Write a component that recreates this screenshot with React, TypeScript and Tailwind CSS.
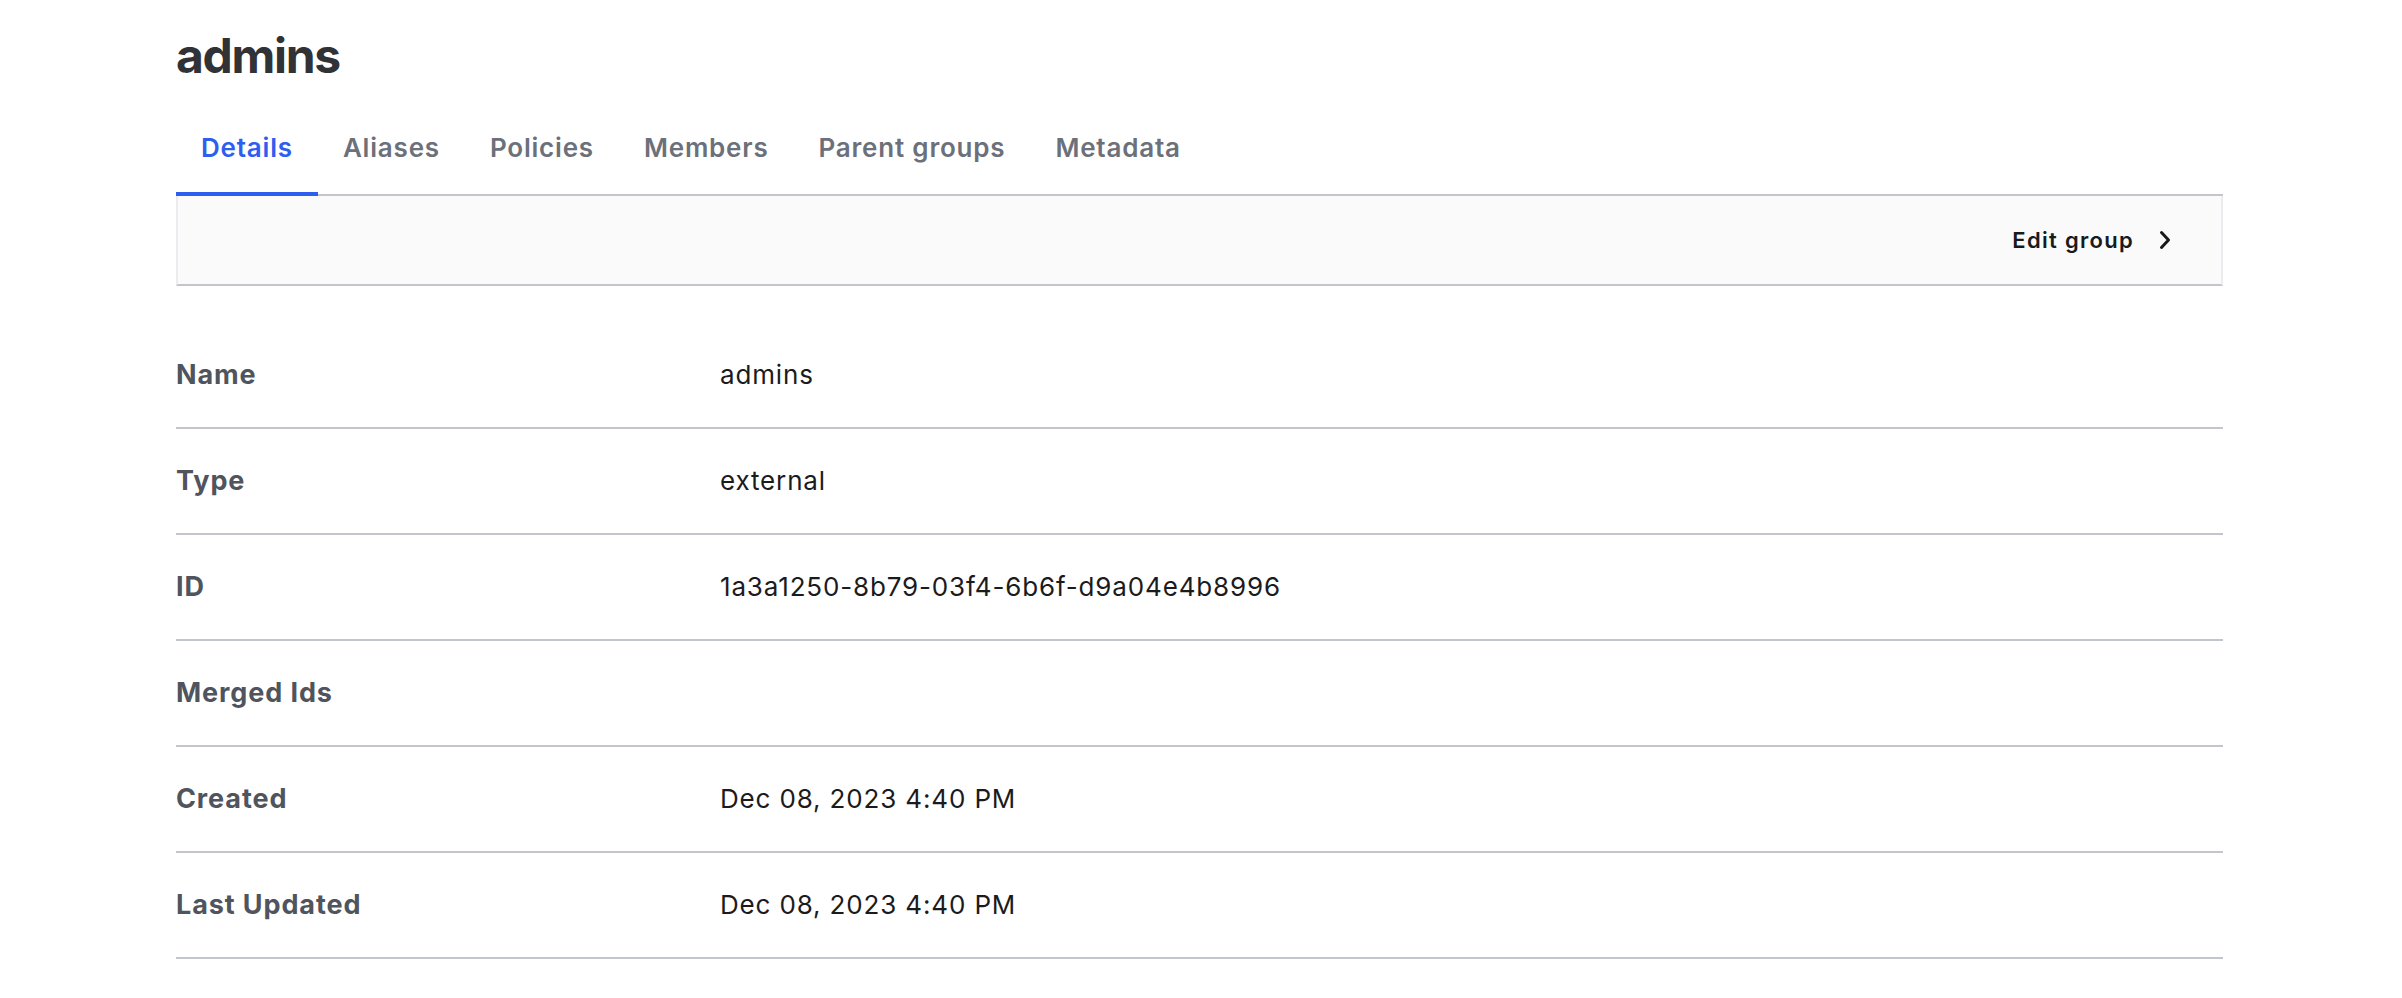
import React from "react";

const tabs = ["Details", "Aliases", "Policies", "Members", "Parent groups", "Metadata"];

const rows: [string, string][] = [
  ["Name", "admins"],
  ["Type", "external"],
  ["ID", "1a3a1250-8b79-03f4-6b6f-d9a04e4b8996"],
  ["Merged Ids", ""],
  ["Created", "Dec 08, 2023 4:40 PM"],
  ["Last Updated", "Dec 08, 2023 4:40 PM"],
];

export default function App() {
  return (
    <div
      className="min-h-[998px] w-full bg-white"
      style={{ fontFamily: "Inter, 'Noto Sans', sans-serif" }}
    >
      <div className="ml-[176px] w-[2047px] pt-[32px]">
        <h1 className="text-[48px] font-bold leading-[48px] text-[#303236] tracking-[-1.3px]">
          admins
        </h1>

        <nav className="mt-[52px] flex border-b-2 border-[#c2c5cd]">
          {tabs.map((t, i) => (
            <div
              key={t}
              className={
                i === 0
                  ? "-mb-[2px] border-b-4 border-[#2e5ef0] px-[25px] pb-[28px] text-[26px] font-semibold leading-[32px] tracking-[0.8px] text-[#2e5ef0]"
                  : "-mb-[2px] border-b-4 border-transparent px-[25px] pb-[28px] text-[26px] font-semibold leading-[32px] tracking-[0.8px] text-[#6b707a]"
              }
            >
              {t}
            </div>
          ))}
        </nav>

        <div className="flex h-[90px] items-center justify-end border-x-2 border-b-2 border-x-[#ececf0] border-b-[#c2c5cd] bg-[#fafafa] pr-[49px]">
          <span className="text-[22px] font-semibold leading-[28px] tracking-[1.3px] text-[#1a1a1c]">
            Edit group
          </span>
          <svg
            className="ml-[24px]"
            width="14"
            height="20"
            viewBox="0 0 14 20"
            fill="none"
            stroke="#1a1a1c"
            strokeWidth="3"
            strokeLinecap="round"
            strokeLinejoin="round"
          >
            <path d="M3.5 2.5 L10.5 10 L3.5 17.5" />
          </svg>
        </div>

        <div className="mt-[37px]">
          {rows.map(([k, v]) => (
            <div
              key={k}
              className="flex h-[106px] items-center border-b-2 border-[#c2c5cd]"
            >
              <div className="w-[544px] text-[27px] font-bold leading-[32px] tracking-[0.9px] text-[#50545d]">
                {k}
              </div>
              <div className="text-[26px] font-normal leading-[32px] tracking-[0.85px] text-[#1b1b1d]">
                {v}
              </div>
            </div>
          ))}
        </div>
      </div>
    </div>
  );
}
